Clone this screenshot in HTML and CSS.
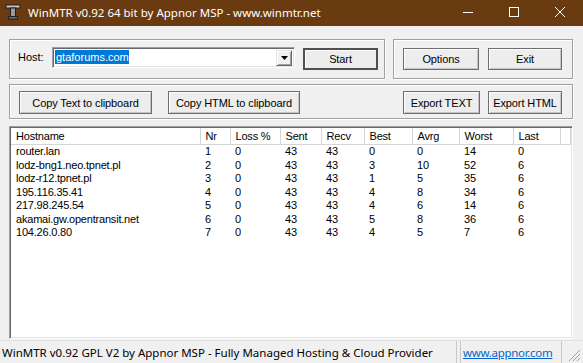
FILE: index.html
```html
<!DOCTYPE html>
<html lang="en">
<head>
  <meta charset="UTF-8" />
  <title>WinMTR</title>
  <link rel="stylesheet" href="styles.css">
</head>
<body>
  <div class="window">
    <div class="titlebar">
      <svg class="app-icon" width="16" height="16" viewBox="0 0 16 16">
        <rect x="1" y="1" width="14" height="3" fill="#c8c8c8" stroke="#202020" stroke-width="1"/>
        <rect x="5.5" y="4" width="5" height="9" fill="#9a9a9a" stroke="#202020" stroke-width="1"/>
        <rect x="3.5" y="12.5" width="9" height="2.5" fill="#707070" stroke="#202020" stroke-width="1"/>
      </svg>
      <span class="title">WinMTR v0.92 64 bit by Appnor MSP - www.winmtr.net</span>
      <div class="caption-btns">
        <span class="cap-btn"><svg width="10" height="10" viewBox="0 0 10 10"><line x1="0" y1="5.5" x2="10" y2="5.5" stroke="#fff" stroke-width="1"/></svg></span>
        <span class="cap-btn"><svg width="10" height="10" viewBox="0 0 10 10"><rect x="0.5" y="0.5" width="9" height="9" fill="none" stroke="#fff" stroke-width="1"/></svg></span>
        <span class="cap-btn"><svg width="10" height="10" viewBox="0 0 10 10"><path d="M0 0 L10 10 M10 0 L0 10" stroke="#fff" stroke-width="1"/></svg></span>
      </div>
    </div>

    <div class="content">
      <div class="row-top">
        <div class="group group-host">
          <label class="host-label">Host:</label>
          <div class="combo">
            <span class="combo-text"><span class="sel">gtaforums.com</span></span>
            <span class="combo-drop"><svg width="7" height="4" viewBox="0 0 7 4"><path d="M0 0 H7 L3.5 4 Z" fill="#000"/></svg></span>
          </div>
          <button class="btn btn-default btn-start">Start</button>
        </div>
        <div class="group group-opts">
          <button class="btn btn-options">Options</button>
          <button class="btn btn-exit">Exit</button>
        </div>
      </div>

      <div class="group group-export">
        <button class="btn btn-copy-text">Copy Text to clipboard</button>
        <button class="btn btn-copy-html">Copy HTML to clipboard</button>
        <button class="btn btn-export-text">Export TEXT</button>
        <button class="btn btn-export-html">Export HTML</button>
      </div>

      <div class="listview">
        <table>
          <colgroup>
            <col style="width:189px"><col style="width:30px"><col style="width:50px"><col style="width:41px"><col style="width:43px"><col style="width:48px"><col style="width:47px"><col style="width:54px"><col style="width:47px"><col>
          </colgroup>
          <thead>
            <tr><th>Hostname</th><th>Nr</th><th>Loss %</th><th>Sent</th><th>Recv</th><th>Best</th><th>Avrg</th><th>Worst</th><th>Last</th><th></th></tr>
          </thead>
          <tbody id="hops"></tbody>
        </table>
      </div>
    </div>

    <div class="statusbar">
      <div class="panel panel-main">WinMTR v0.92 GPL V2 by Appnor MSP - Fully Managed Hosting &amp; Cloud Provider</div>
      <div class="panel panel-link"><a href="#">www.appnor.com</a></div>
      <svg class="grip" width="13" height="13" viewBox="0 0 13 13">
        <path d="M12 1 L1 12 M12 5 L5 12 M12 9 L9 12" stroke="#a0a0a0" stroke-width="1"/>
      </svg>
    </div>
  </div>

  <script>
    const hops = [
      ["router.lan", 1, 0, 43, 43, 0, 0, 14, 0],
      ["lodz-bng1.neo.tpnet.pl", 2, 0, 43, 43, 3, 10, 52, 6],
      ["lodz-r12.tpnet.pl", 3, 0, 43, 43, 1, 5, 35, 6],
      ["195.116.35.41", 4, 0, 43, 43, 4, 8, 34, 6],
      ["217.98.245.54", 5, 0, 43, 43, 4, 6, 14, 6],
      ["akamai.gw.opentransit.net", 6, 0, 43, 43, 5, 8, 36, 6],
      ["104.26.0.80", 7, 0, 43, 43, 4, 5, 7, 6]
    ];

    const body = document.getElementById('hops');
    hops.forEach(h => {
      body.innerHTML += '<tr>' + h.map(v => '<td>' + v + '</td>').join('') + '<td></td></tr>';
    });
  </script>
</body>
</html>
```

FILE: styles.css
```css
html, body {
  margin: 0;
  padding: 0;
}
body {
  background: #f0f0f0;
  font-family: "Liberation Sans", Arial, sans-serif;
  font-size: 11px;
  color: #000;
  width: 583px;
  height: 363px;
  overflow: hidden;
}
.window {
  width: 583px;
  height: 363px;
  display: flex;
  flex-direction: column;
}

/* title bar */
.titlebar {
  height: 26px;
  background: #6a3b11;
  color: #fff;
  display: flex;
  align-items: center;
  flex-shrink: 0;
}
.app-icon {
  margin-left: 5px;
  margin-top: -2px;
}
.title {
  margin-left: 7px;
  font-family: "Noto Sans", sans-serif;
  font-size: 11.5px;
  margin-top: -1px;
}
.caption-btns {
  margin-left: auto;
  display: flex;
  height: 26px;
}
.cap-btn {
  width: 46px;
  height: 26px;
  display: flex;
  align-items: center;
  justify-content: center;
}
.cap-btn svg {
  margin-top: -2px;
}

/* main area */
.content {
  padding: 13px 10px 0 9px;
  flex: 1;
}
.row-top {
  display: flex;
  gap: 8px;
}
.group {
  box-sizing: border-box;
  border: 1px solid #a0a0a0;
  box-shadow: 1px 1px 0 #fff, inset 1px 1px 0 #fff;
  display: flex;
  align-items: flex-start;
}
.group-host {
  width: 376px;
  height: 40px;
  padding: 7px 0 0 8px;
}
.host-label {
  width: 34px;
  line-height: 21px;
}
.combo {
  box-sizing: border-box;
  width: 243px;
  height: 21px;
  background: #fff;
  border-top: 1px solid #a0a0a0;
  border-left: 1px solid #a0a0a0;
  border-right: 1px solid #fff;
  border-bottom: 1px solid #fff;
  box-shadow: inset 1px 1px 0 #696969, inset -1px -1px 0 #e3e3e3;
  display: flex;
  align-items: center;
  padding: 0 2px 0 2px;
}
.combo-text {
  flex: 1;
  line-height: 15px;
}
.sel {
  background: #0078d7;
  color: #fff;
  padding: 1px 0 1px 1px;
}
.combo-drop {
  box-sizing: border-box;
  width: 16px;
  height: 16px;
  background: #f0f0f0;
  border: 1px solid;
  border-color: #e3e3e3 #696969 #696969 #e3e3e3;
  box-shadow: inset 1px 1px 0 #fff, inset -1px -1px 0 #a0a0a0;
  display: flex;
  align-items: center;
  justify-content: center;
}

.btn {
  box-sizing: border-box;
  font-family: "Liberation Sans", Arial, sans-serif;
  font-size: 11px;
  letter-spacing: -0.1px;
  color: #000;
  background: #ededed;
  border: 1px solid #6e6e6e;
  box-shadow: inset 1px 1px 0 #fdfdfd, inset -1px -1px 0 #c4c4c4;
  height: 23px;
  padding: 0;
  margin: 0;
}
.btn-default {
  border: 2px solid #505050;
  box-shadow: inset 1px 1px 0 #fdfdfd;
}
.btn-start {
  width: 75px;
  height: 22px;
  margin: 1px 0 0 8px;
}

.group-opts {
  width: 180px;
  height: 40px;
  padding: 8px 0 0 9px;
}
.btn-options {
  width: 76px;
  height: 22px;
}
.btn-exit {
  width: 74px;
  height: 22px;
  margin-left: 9px;
}

.group-export {
  width: 564px;
  height: 35px;
  margin-top: 5px;
  padding: 6px 0 0 9px;
}
.btn-copy-text {
  width: 133px;
}
.btn-copy-html {
  width: 132px;
  margin-left: 16px;
}
.btn-export-text {
  width: 77px;
  margin-left: auto;
}
.btn-export-html {
  width: 74px;
  margin-left: 8px;
  margin-right: 10px;
}

/* list view */
.listview {
  box-sizing: border-box;
  width: 564px;
  height: 213px;
  margin-top: 7px;
  background: #fff;
  border-top: 1px solid #a0a0a0;
  border-left: 1px solid #a0a0a0;
  border-right: 1px solid #fff;
  border-bottom: 1px solid #fff;
  box-shadow: inset 1px 1px 0 #696969, inset -1px -1px 0 #e3e3e3;
  padding: 1px;
  overflow: hidden;
}
.listview table {
  table-layout: fixed;
  border-collapse: collapse;
  width: 560px;
  letter-spacing: -0.2px;
}
.listview th {
  font-weight: normal;
  text-align: left;
  height: 16px;
  padding: 0 0 0 5px;
  border-right: 1px solid #d5d5d5;
  border-bottom: 1px solid #d5d5d5;
  white-space: nowrap;
  overflow: hidden;
}
.listview td {
  height: 13.5px;
  padding: 0 0 0 5px;
  line-height: 13.5px;
  white-space: nowrap;
  overflow: hidden;
}

/* status bar */
.statusbar {
  height: 22px;
  display: flex;
  align-items: stretch;
  position: relative;
  font-family: "Noto Sans", sans-serif;
  font-size: 11.5px;
  border-top: 1px solid #e3e3e3;
  flex-shrink: 0;
}
.panel {
  display: flex;
  align-items: center;
  white-space: nowrap;
}
.panel-main {
  width: 454px;
  padding-left: 2px;
  border-right: 1px solid #c8c8c8;
}
.panel-link {
  margin-left: 3px;
  padding-left: 2px;
  width: 98px;
  border-left: 1px solid #c8c8c8;
  border-right: 1px solid #c8c8c8;
  letter-spacing: -0.3px;
}
.panel-link a {
  color: #0066cc;
}
.grip {
  position: absolute;
  right: 2px;
  bottom: 1px;
}
```
